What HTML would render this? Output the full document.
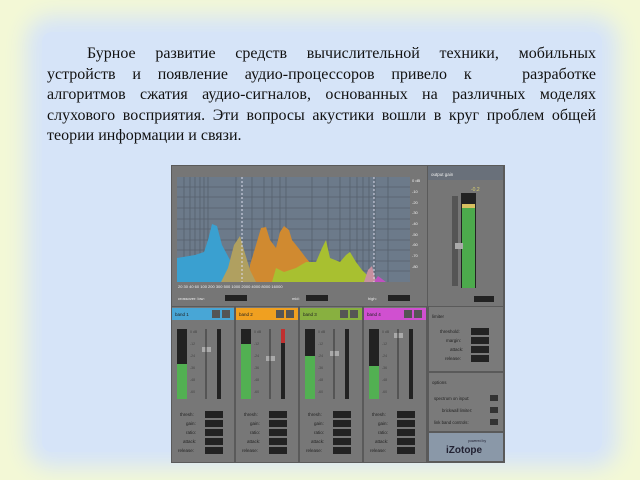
<!DOCTYPE html>
<html><head><meta charset="utf-8"><style>
html,body{margin:0;padding:0}
body{width:640px;height:480px;position:relative;overflow:hidden;background:#f3f8d6}
.blue{position:absolute;left:42px;top:32px;width:560px;height:420px;background:#d6e4f8;box-shadow:0 0 22px 16px #d6e4f8;border-radius:10px}
.txt{position:absolute;left:47px;top:44px;width:549px;font-family:"Liberation Serif",serif;font-size:16px;line-height:20.6px;color:#111}
.txt div{text-align:justify;text-align-last:justify;white-space:nowrap}
.txt div.l{text-align-last:left}
svg{position:absolute;left:0;top:0}
</style></head><body>
<div class="blue"></div>
<div class="txt">
<div style="padding-left:40px">Бурное развитие средств вычислительной техники, мобильных</div>
<div>устройств и появление аудио-процессоров привело к &nbsp;&nbsp;разработке</div>
<div>алгоритмов сжатия аудио-сигналов, основанных на различных моделях</div>
<div>слухового восприятия. Эти вопросы акустики вошли в круг проблем общей</div>
<div class="l">теории информации и связи.</div>
</div>
<svg width="640" height="480" viewBox="0 0 640 480" font-family="Liberation Sans,sans-serif">
<rect x="171" y="165" width="334" height="298" fill="#5a5a5a"/>
<rect x="172" y="166" width="255" height="140" fill="#767676"/>
<rect x="177" y="177" width="233" height="105" fill="#6c7a8a"/>
<g stroke="#56606c" stroke-width="0.8">
<line x1="177" y1="187" x2="410" y2="187"/><line x1="177" y1="197" x2="410" y2="197"/><line x1="177" y1="208" x2="410" y2="208"/><line x1="177" y1="219" x2="410" y2="219"/><line x1="177" y1="229" x2="410" y2="229"/><line x1="177" y1="240" x2="410" y2="240"/><line x1="177" y1="250" x2="410" y2="250"/><line x1="177" y1="261" x2="410" y2="261"/><line x1="177" y1="271" x2="410" y2="271"/>
<line x1="184" y1="177" x2="184" y2="282"/><line x1="190" y1="177" x2="190" y2="282"/><line x1="195" y1="177" x2="195" y2="282"/><line x1="200" y1="177" x2="200" y2="282"/><line x1="204" y1="177" x2="204" y2="282"/><line x1="208" y1="177" x2="208" y2="282"/><line x1="236" y1="177" x2="236" y2="282"/><line x1="252" y1="177" x2="252" y2="282"/><line x1="264" y1="177" x2="264" y2="282"/><line x1="272" y1="177" x2="272" y2="282"/><line x1="280" y1="177" x2="280" y2="282"/><line x1="286" y1="177" x2="286" y2="282"/><line x1="312" y1="177" x2="312" y2="282"/><line x1="328" y1="177" x2="328" y2="282"/><line x1="340" y1="177" x2="340" y2="282"/><line x1="350" y1="177" x2="350" y2="282"/><line x1="357" y1="177" x2="357" y2="282"/><line x1="363" y1="177" x2="363" y2="282"/><line x1="369" y1="177" x2="369" y2="282"/><line x1="375" y1="177" x2="375" y2="282"/><line x1="388" y1="177" x2="388" y2="282"/>
</g>
<polygon fill="#3aa0d0" points="177,258 195,255 204,252 208,240 212,224 217,226 222,245 230,260 238,266 240,282 177,282"/>
<polygon fill="#d08a30" points="248,282 250,265 256,245 261,228 266,227 270,240 276,248 280,232 284,226 289,230 292,240 300,250 306,258 312,265 322,272 330,282"/>
<polygon fill="#b0a060" points="221,282 228,268 234,245 240,236 244,250 250,270 256,282"/>
<polygon fill="#a8c030" points="272,282 276,268 284,272 296,268 306,262 316,262 322,248 326,240 330,258 340,262 346,255 350,252 356,262 362,270 368,276 370,282"/>
<polygon fill="#c890a0" points="364,282 368,270 372,266 376,282"/>
<polygon fill="#c050c0" points="374,282 378,276 386,282"/>
<line x1="242" y1="177" x2="242" y2="282" stroke="#dde" stroke-dasharray="2,2"/>
<line x1="374" y1="177" x2="374" y2="282" stroke="#dde" stroke-dasharray="2,2"/>
<g fill="#eee" font-size="4"><text x="412" y="182">0 dB</text><text x="412" y="193">-10</text><text x="412" y="204">-20</text><text x="412" y="214">-30</text><text x="412" y="225">-40</text><text x="412" y="236">-50</text><text x="412" y="246">-60</text><text x="412" y="257">-70</text><text x="412" y="268">-80</text>
<text x="178" y="288">20 30 40 60 100 200 300 500 1000 2000 4000 8000 16000</text>
<text x="178" y="300">crossover: low:</text><text x="292" y="300">mid:</text><text x="368" y="300">high:</text></g>
<rect x="225" y="295" width="22" height="6" fill="#222"/><rect x="306" y="295" width="22" height="6" fill="#222"/><rect x="388" y="295" width="22" height="6" fill="#222"/>
<rect x="428" y="166" width="75" height="140" fill="#767676"/>
<rect x="428" y="166" width="75" height="14" fill="#69707a"/>
<text x="431" y="176" font-size="4.5" fill="#eee">output gain</text>
<rect x="452" y="196" width="6" height="90" fill="#555"/>
<rect x="461" y="193" width="15" height="95" fill="#222"/>
<rect x="462" y="208" width="13" height="80" fill="#4caa4c"/>
<rect x="462" y="204" width="13" height="4" fill="#d8c060"/>
<rect x="455" y="243" width="8" height="6" fill="#aaa"/>
<text x="471" y="191" font-size="5" fill="#d8d070">-0.2</text>
<rect x="474" y="296" width="20" height="6" fill="#222"/>
<g>
<rect x="172" y="307" width="62" height="155" fill="#777"/><rect x="172" y="308" width="62" height="12" fill="#48a6d6"/>
<rect x="236" y="307" width="62" height="155" fill="#777"/><rect x="236" y="308" width="62" height="12" fill="#f0a020"/>
<rect x="300" y="307" width="62" height="155" fill="#777"/><rect x="300" y="308" width="62" height="12" fill="#88b040"/>
<rect x="364" y="307" width="62" height="155" fill="#777"/><rect x="364" y="308" width="62" height="12" fill="#d050d0"/>
</g>
<g font-size="4.5" fill="#222"><text x="175" y="316">band 1</text><text x="239" y="316">band 2</text><text x="303" y="316">band 3</text><text x="367" y="316">band 4</text></g>
<g fill="#555"><rect x="212" y="310" width="8" height="8"/><rect x="222" y="310" width="8" height="8"/><rect x="276" y="310" width="8" height="8"/><rect x="286" y="310" width="8" height="8"/><rect x="340" y="310" width="8" height="8"/><rect x="350" y="310" width="8" height="8"/><rect x="404" y="310" width="8" height="8"/><rect x="414" y="310" width="8" height="8"/></g>
<g fill="#222">
<rect x="177" y="329" width="10" height="70"/><rect x="241" y="329" width="10" height="70"/><rect x="305" y="329" width="10" height="70"/><rect x="369" y="329" width="10" height="70"/>
<rect x="217" y="329" width="4" height="70"/><rect x="281" y="329" width="4" height="70"/><rect x="345" y="329" width="4" height="70"/><rect x="409" y="329" width="4" height="70"/>
</g>
<g fill="#52b052"><rect x="177" y="364" width="10" height="35"/><rect x="241" y="344" width="10" height="55"/><rect x="305" y="356" width="10" height="43"/><rect x="369" y="366" width="10" height="33"/></g>
<rect x="281" y="329" width="4" height="14" fill="#c03030"/>
<g fill="#aaa"><rect x="202" y="347" width="9" height="5"/><rect x="266" y="356" width="9" height="5"/><rect x="330" y="351" width="9" height="5"/><rect x="394" y="333" width="9" height="5"/></g>
<g stroke="#333"><line x1="206" y1="329" x2="206" y2="399"/><line x1="270" y1="329" x2="270" y2="399"/><line x1="334" y1="329" x2="334" y2="399"/><line x1="398" y1="329" x2="398" y2="399"/></g>
<g fill="#444" font-size="3.5">
<text x="190" y="333">0 dB</text><text x="190" y="345">-12</text><text x="190" y="357">-24</text><text x="190" y="369">-36</text><text x="190" y="381">-48</text><text x="190" y="393">-60</text>
<text x="254" y="333">0 dB</text><text x="254" y="345">-12</text><text x="254" y="357">-24</text><text x="254" y="369">-36</text><text x="254" y="381">-48</text><text x="254" y="393">-60</text>
<text x="318" y="333">0 dB</text><text x="318" y="345">-12</text><text x="318" y="357">-24</text><text x="318" y="369">-36</text><text x="318" y="381">-48</text><text x="318" y="393">-60</text>
<text x="382" y="333">0 dB</text><text x="382" y="345">-12</text><text x="382" y="357">-24</text><text x="382" y="369">-36</text><text x="382" y="381">-48</text><text x="382" y="393">-60</text>
</g>
<g fill="#222">
<rect x="205" y="411" width="18" height="7"/><rect x="205" y="420" width="18" height="7"/><rect x="205" y="429" width="18" height="7"/><rect x="205" y="438" width="18" height="7"/><rect x="205" y="447" width="18" height="7"/>
<rect x="269" y="411" width="18" height="7"/><rect x="269" y="420" width="18" height="7"/><rect x="269" y="429" width="18" height="7"/><rect x="269" y="438" width="18" height="7"/><rect x="269" y="447" width="18" height="7"/>
<rect x="333" y="411" width="18" height="7"/><rect x="333" y="420" width="18" height="7"/><rect x="333" y="429" width="18" height="7"/><rect x="333" y="438" width="18" height="7"/><rect x="333" y="447" width="18" height="7"/>
<rect x="397" y="411" width="18" height="7"/><rect x="397" y="420" width="18" height="7"/><rect x="397" y="429" width="18" height="7"/><rect x="397" y="438" width="18" height="7"/><rect x="397" y="447" width="18" height="7"/>
</g>
<g font-size="4.5" fill="#222">
<text x="180" y="416">thresh:</text><text x="186" y="425">gain:</text><text x="186" y="434">ratio:</text><text x="183" y="443">attack:</text><text x="178" y="452">release:</text>
<text x="244" y="416">thresh:</text><text x="250" y="425">gain:</text><text x="250" y="434">ratio:</text><text x="247" y="443">attack:</text><text x="242" y="452">release:</text>
<text x="308" y="416">thresh:</text><text x="314" y="425">gain:</text><text x="314" y="434">ratio:</text><text x="311" y="443">attack:</text><text x="306" y="452">release:</text>
<text x="372" y="416">thresh:</text><text x="378" y="425">gain:</text><text x="378" y="434">ratio:</text><text x="375" y="443">attack:</text><text x="370" y="452">release:</text>
</g>
<rect x="429" y="307" width="74" height="64" fill="#7a7a7a"/>
<text x="432" y="318" font-size="4.5" fill="#222">limiter</text>
<g fill="#222"><rect x="471" y="328" width="18" height="7"/><rect x="471" y="337" width="18" height="7"/><rect x="471" y="346" width="18" height="7"/><rect x="471" y="355" width="18" height="7"/></g>
<g font-size="4.5" fill="#222"><text x="440" y="333">threshold:</text><text x="446" y="342">margin:</text><text x="450" y="351">attack:</text><text x="445" y="360">release:</text></g>
<rect x="429" y="373" width="74" height="58" fill="#7a7a7a"/>
<text x="432" y="384" font-size="4.5" fill="#222">options</text>
<g fill="#333"><rect x="490" y="395" width="8" height="6"/><rect x="490" y="407" width="8" height="6"/><rect x="490" y="419" width="8" height="6"/></g>
<g font-size="4.3" fill="#222"><text x="434" y="400">spectrum on input:</text><text x="442" y="412">brickwall limiter:</text><text x="434" y="424">link band controls:</text></g>
<rect x="429" y="433" width="74" height="28" fill="#8a98a8"/>
<text x="446" y="453" font-size="10" fill="#223" font-weight="bold">iZotope</text>
<text x="468" y="442" font-size="3.5" fill="#223">powered by</text>
</svg>
</body></html>
